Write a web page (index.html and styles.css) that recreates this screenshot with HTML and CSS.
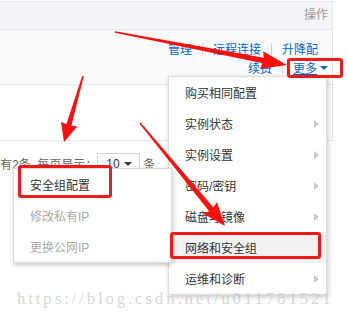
FILE: index.html
```html
<!DOCTYPE html>
<html lang="zh-CN">
<head>
    <meta charset="UTF-8">
    <meta name="viewport" content="width=device-width, initial-scale=1.0">
    <title>更多操作</title>
    <link rel="stylesheet" href="styles.css">
</head>
<body>
    <section class="page">
        <div class="grid">
            <div class="thead">操作</div>
            <div class="row hover">
                <div class="ops">
                    <div class="ops-line first">
                        <a href="#">管理</a><span class="sep"></span><a href="#">远程连接</a><span class="sep"></span><a href="#">升降配</a>
                    </div>
                    <div class="ops-line">
                        <a href="#">续费</a><span class="sep"></span><a href="#" class="more">更多</a><span class="caret"></span>
                    </div>
                </div>
            </div>
            <div class="row"></div>
        </div>

        <div class="pager">
            <span>有2条, 每页显示：</span>
            <div class="select"><span>10</span><span class="caret dark"></span></div>
            <span class="unit">条</span>
        </div>

        <!-- dropdown of 更多 -->
        <ul class="menu main-menu">
            <li>购买相同配置</li>
            <li class="sub">实例状态</li>
            <li class="sub">实例设置</li>
            <li class="sub">密码/密钥</li>
            <li class="sub">磁盘与镜像</li>
            <li class="active">网络和安全组</li>
            <li class="sub">运维和诊断</li>
        </ul>

        <!-- submenu of 网络和安全组 -->
        <ul class="menu side-menu">
            <li>安全组配置</li>
            <li class="disabled">修改私有IP</li>
            <li class="disabled">更换公网IP</li>
        </ul>

        <div class="mark mark-more"></div>
        <div class="mark mark-sg"></div>
        <div class="mark mark-net"></div>

        <svg class="arrows" width="348" height="321" viewBox="0 0 348 321">
            <g fill="#fb1010">
                <g transform="translate(115 32) rotate(10.86)">
                    <polygon points="0,-0.8 151,-2.8 149,-9 175,0 149,9 151,2.8 0,0.8"/>
                </g>
                <g transform="translate(83 76) rotate(106.06)">
                    <polygon points="0,-0.8 51,-2.6 50,-8.5 68.7,0 50,8.5 51,2.6 0,0.8"/>
                </g>
                <g transform="translate(140 123) rotate(50.47)">
                    <polygon points="0,-0.8 112,-2.8 110,-9 133.5,0 110,9 112,2.8 0,0.8"/>
                </g>
            </g>
        </svg>

        <div class="watermark">https://blog.csdn.net/u011781521</div>
    </section>
</body>
</html>
```

FILE: styles.css
```css
*{
    box-sizing: border-box;
}
body{
    margin: 0;
    padding: 0;
    background-color: #fff;
    font-family: "Liberation Sans", "Noto Sans CJK SC", sans-serif;
    font-size: 12px;
    color: #333;
}
.page{
    position: relative;
    width: 348px;
    height: 321px;
    padding-top: 1px;
    overflow: hidden;
}
.grid{
    width: 333px;
    border-right: 1px solid #e3e5ea;
    border-top: 1px solid #e3e5ea;
}
.thead{
    height: 28px;
    line-height: 27px;
    padding-right: 4px;
    text-align: right;
    color: #999;
    background-color: #f4f5f9;
    border-bottom: 1px solid #e3e5ea;
}
.row{
    height: 55px;
    border-bottom: 1px solid #e6e6e6;
}
.row.hover{
    background-color: #fafafa;
}
.row + .row{
    height: 56px;
}
.ops{
    padding: 9px 4px 0 0;
    display: flex;
    flex-direction: column;
    align-items: flex-end;
}
.ops-line{
    display: flex;
    align-items: center;
    height: 19px;
}
.ops-line.first{
    padding-right: 10px;
}
a{
    color: #0066cc;
    text-decoration: none;
}
.more{
    text-decoration: underline;
}
.sep{
    width: 1px;
    height: 12px;
    margin: 0 10px;
    background-color: #cfcfcf;
}
.caret{
    margin-left: 3px;
    border-left: 4px solid transparent;
    border-right: 4px solid transparent;
    border-top: 4px solid #0066cc;
}
.caret.dark{
    border-top-color: #333;
}
.pager{
    display: flex;
    align-items: center;
    padding-top: 12px;
    color: #666;
}
.select{
    width: 43px;
    height: 21px;
    padding: 0 7px 0 8px;
    display: flex;
    align-items: center;
    justify-content: space-between;
    border: 1px solid #d4d4d4;
    color: #333;
}
.unit{
    margin-left: 3px;
}
.menu{
    position: absolute;
    margin: 0;
    padding: 0;
    list-style: none;
    background-color: #fff;
    border: 1px solid #dcdcdc;
    box-shadow: 1px 2px 5px rgba(0,0,0,.22);
}
.menu li{
    height: 31px;
    padding: 0 7px 0 16px;
    display: flex;
    align-items: center;
    justify-content: space-between;
    font-size: 12px;
    color: #333;
}
.menu li.sub::after{
    content: "";
    border-top: 4px solid transparent;
    border-bottom: 4px solid transparent;
    border-left: 5px solid #c8c8c8;
}
.menu li.active{
    background-color: #f2f2f2;
}
.menu li.disabled{
    color: #aaa;
}
.main-menu{
    left: 168px;
    top: 76px;
    width: 159px;
    z-index: 1;
}
.side-menu{
    left: 13px;
    top: 168px;
    width: 159px;
    z-index: 2;
}
.mark{
    position: absolute;
    border: 3px solid #f41818;
    border-radius: 3px;
    z-index: 3;
}
.mark-more{
    left: 287px;
    top: 58px;
    width: 56px;
    height: 20px;
}
.mark-sg{
    left: 18px;
    top: 165px;
    width: 94px;
    height: 33px;
}
.mark-net{
    left: 170px;
    top: 232px;
    width: 151px;
    height: 27px;
}
.arrows{
    position: absolute;
    left: 0;
    top: 0;
    z-index: 4;
}
.watermark{
    position: absolute;
    left: 17px;
    top: 289px;
    z-index: 5;
    font-family: "Liberation Serif", serif;
    font-size: 17px;
    letter-spacing: 2.8px;
    color: rgba(200,200,200,.75);
}
```
